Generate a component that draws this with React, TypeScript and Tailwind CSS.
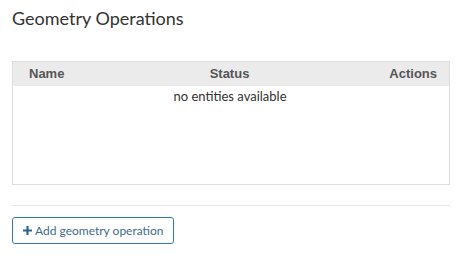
import React from "react";

export default function App() {
  return (
    <div className="w-[458px] h-[269px] bg-white pl-3 pr-[8px] pt-[5px]" style={{ fontFamily: "Lato, 'Liberation Sans', sans-serif" }}>
      <h1 className="text-[18px] leading-[26px] text-[#333] font-normal">Geometry Operations</h1>
      <div className="mt-[30px] h-[124px] border border-[#dddddd]">
        <div className="flex items-center h-[24px] bg-[#ebebeb] pl-4 pr-3 text-[13px] font-bold text-[#555]" style={{ fontFamily: "'Liberation Sans', Arial, sans-serif" }}>
          <div className="flex-1">Name</div>
          <div className="flex-1 text-center pr-[7px]">Status</div>
          <div className="flex-1 text-right">Actions</div>
        </div>
        <div className="text-center text-[13px] leading-[20px] text-[#333] pr-[2px]">no entities available</div>
      </div>
      <div className="mt-[20px] border-t border-[#e5e5e5]"></div>
      <button className="mt-[11px] h-[27px] w-[162px] flex items-center gap-[3px] pl-[10px] border border-[#2a7fb0] rounded-[3px] text-[12px] text-[#3d6b8e] whitespace-nowrap">
        <svg width="9" height="9" viewBox="0 0 10 10" className="shrink-0">
          <path d="M3.8 0h2.4v3.8H10v2.4H6.2V10H3.8V6.2H0V3.8h3.8z" fill="#2a6590" />
        </svg>
        <span>Add geometry operation</span>
      </button>
    </div>
  );
}
